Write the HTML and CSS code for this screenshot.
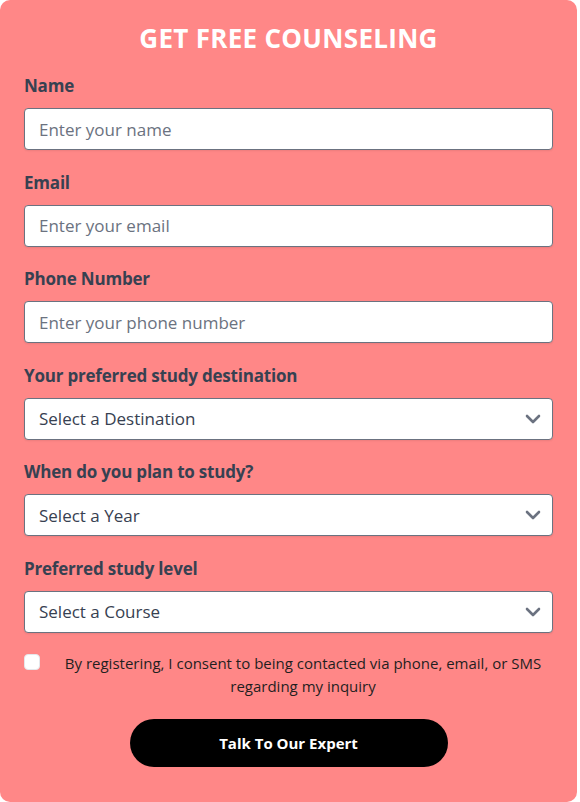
FILE: index.html
```html
<!DOCTYPE html>
<html lang="en">
<head>
    <meta charset="UTF-8">
    <meta name="viewport" content="width=device-width, initial-scale=1.0">
    <title>Get Free Counseling</title>
    <link rel="stylesheet" href="styles.css">
</head>
<body>
    <form class="card">
        <h2 class="title">GET FREE COUNSELING</h2>

        <div class="field">
            <label for="name">Name</label>
            <input id="name" type="text" placeholder="Enter your name">
        </div>
        <div class="field">
            <label for="email">Email</label>
            <input id="email" type="email" placeholder="Enter your email">
        </div>
        <div class="field">
            <label for="phone">Phone Number</label>
            <input id="phone" type="tel" placeholder="Enter your phone number">
        </div>
        <div class="field">
            <label for="dest">Your preferred study destination</label>
            <div class="select-wrap">
                <select id="dest"><option>Select a Destination</option></select>
                <svg class="chevron" viewBox="0 0 16 10" width="16" height="10"><path d="M2 2l6 6 6-6" fill="none" stroke="#6b7280" stroke-width="2.6" stroke-linecap="round" stroke-linejoin="round"/></svg>
            </div>
        </div>
        <div class="field">
            <label for="year">When do you plan to study?</label>
            <div class="select-wrap">
                <select id="year"><option>Select a Year</option></select>
                <svg class="chevron" viewBox="0 0 16 10" width="16" height="10"><path d="M2 2l6 6 6-6" fill="none" stroke="#6b7280" stroke-width="2.6" stroke-linecap="round" stroke-linejoin="round"/></svg>
            </div>
        </div>
        <div class="field">
            <label for="level">Preferred study level</label>
            <div class="select-wrap">
                <select id="level"><option>Select a Course</option></select>
                <svg class="chevron" viewBox="0 0 16 10" width="16" height="10"><path d="M2 2l6 6 6-6" fill="none" stroke="#6b7280" stroke-width="2.6" stroke-linecap="round" stroke-linejoin="round"/></svg>
            </div>
        </div>

        <div class="consent">
            <input type="checkbox" class="check">
            <p>By registering, I consent to being contacted via phone, email, or SMS regarding my inquiry</p>
        </div>

        <button type="button" class="submit">Talk To Our Expert</button>
    </form>
</body>
</html>
```

FILE: styles.css
```css
body {
    margin: 0;
    background: #fff;
    font-family: "Open Sans", "Noto Sans", sans-serif;
}
.card {
    box-sizing: border-box;
    width: 577px;
    height: 802px;
    background-color: #ff8787;
    border-radius: 10px;
    padding: 22px 24px 0 24px;
    display: flex;
    flex-direction: column;
}
.title {
    margin: 0 0 20px 0;
    text-align: center;
    color: #fff;
    font-size: 26px;
    line-height: 32px;
    font-weight: 700;
    letter-spacing: 0.3px;
}
.field {
    display: flex;
    flex-direction: column;
    margin-bottom: 20.6px;
}
.field label {
    color: #374151;
    font-size: 17px;
    line-height: 24px;
    font-weight: 700;
    margin-bottom: 10px;
    letter-spacing: -0.2px;
}
.field input,
.field select {
    box-sizing: border-box;
    width: 100%;
    height: 42px;
    border: 1px solid #6b7280;
    border-radius: 4px;
    background: #fff;
    padding: 0 14px;
    font-family: inherit;
    font-size: 17px;
    color: #374151;
    box-shadow: 0 1px 2px rgba(0, 0, 0, 0.08);
}
.field input::placeholder {
    color: #6b7280;
}
.select-wrap {
    position: relative;
}
.field select {
    appearance: none;
    -webkit-appearance: none;
}
.chevron {
    position: absolute;
    right: 12px;
    top: 16px;
    pointer-events: none;
}
.consent {
    display: flex;
    align-items: flex-start;
    margin-top: -2px;
}
.check {
    appearance: none;
    -webkit-appearance: none;
    width: 16px;
    height: 16px;
    margin: 2px 21px 0 0;
    background: #fff;
    border: 1px solid #e5e7eb;
    border-radius: 4px;
    flex-shrink: 0;
}
.consent p {
    flex: 1;
    margin: 0;
    padding-right: 8px;
    text-align: center;
    color: #1f1f1f;
    font-size: 15px;
    line-height: 23px;
}
.submit {
    align-self: center;
    margin-top: 21px;
    width: 318px;
    height: 48px;
    border: none;
    border-radius: 24px;
    background-color: #000;
    color: #fff;
    font-family: inherit;
    font-size: 15px;
    font-weight: 700;
    cursor: pointer;
}
```
